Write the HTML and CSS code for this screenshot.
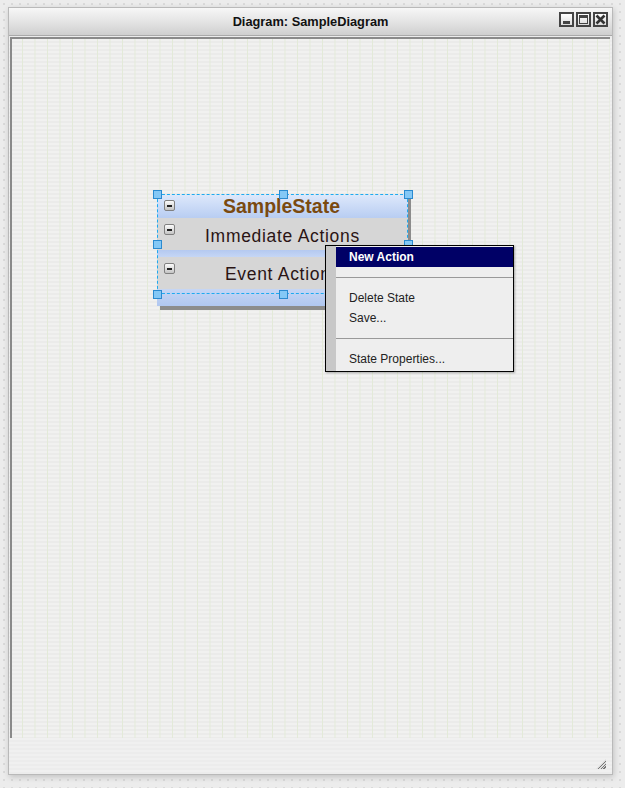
FILE: index.html
```html
<!DOCTYPE html>
<html>
<head>
<meta charset="utf-8">
<link rel="stylesheet" href="styles.css">
</head>
<body>
<div class="window">
  <div class="titlebar">
    <span class="title">Diagram: SampleDiagram</span>
    <div class="winbtns">
      <span class="wbtn wmin"></span>
      <span class="wbtn wmax"></span>
      <span class="wbtn wclose"><svg width="11" height="11" viewBox="0 0 11 11"><path d="M1.5 1.5L9.5 9.5M9.5 1.5L1.5 9.5" stroke="#333" stroke-width="2.6"/></svg></span>
    </div>
  </div>
  <div class="body">
    <div class="canvas">
      <div class="node">
        <div class="node-head"><span class="tog"></span><span class="node-title">SampleState</span></div>
        <div class="node-row first"><span class="tog"></span><span>Immediate Actions</span></div>
        <div class="node-gap"></div>
        <div class="node-row"><span class="tog"></span><span>Event Actions</span></div>
        <div class="node-foot"></div>
      </div>
      <div class="sel"></div>
      <span class="h" style="left:141px;top:151px"></span>
      <span class="h" style="left:267px;top:151px"></span>
      <span class="h" style="left:392px;top:151px"></span>
      <span class="h" style="left:141px;top:201px"></span>
      <span class="h" style="left:392px;top:201px"></span>
      <span class="h" style="left:141px;top:251px"></span>
      <span class="h" style="left:267px;top:251px"></span>
      <span class="h" style="left:392px;top:251px"></span>
      <div class="menu">
        <div class="mi active">New Action</div>
        <div class="msep"></div>
        <div class="mi">Delete State</div>
        <div class="mi">Save...</div>
        <div class="msep"></div>
        <div class="mi">State Properties...</div>
      </div>
    </div>
    <div class="status"><span class="grip"></span></div>
  </div>
</div>
</body>
</html>
```

FILE: styles.css
```css
html, body {
  margin: 0;
  padding: 0;
}
body {
  width: 625px;
  height: 788px;
  background-color: #ececec;
  background-image: radial-gradient(circle, #dadada 0.8px, transparent 1.2px);
  background-size: 8px 8px;
  font-family: "Liberation Sans", Arial, sans-serif;
  overflow: hidden;
  padding-top: 7px;
  box-sizing: border-box;
}
.window {
  margin-left: 8px;
  width: 605px;
  height: 768px;
  box-sizing: border-box;
  border: 1px solid #b9b9b9;
  background: #ededed;
  box-shadow: 1px 2px 6px rgba(0,0,0,0.18);
  display: flex;
  flex-direction: column;
}
.titlebar {
  height: 28px;
  flex: none;
  box-sizing: border-box;
  border-bottom: 1px solid #a9a9a9;
  background: linear-gradient(#f7f7f7, #e4e4e4 50%, #cfcfcf);
  position: relative;
  display: flex;
  align-items: center;
  justify-content: center;
}
.title {
  font-size: 12.8px;
  font-weight: bold;
  color: #111;
  margin-left: 0px;
}
.winbtns {
  position: absolute;
  right: 4px;
  top: 4px;
  display: flex;
  gap: 2px;
}
.wbtn {
  width: 15px;
  height: 15px;
  box-sizing: border-box;
  border: 2px solid #444;
  background: linear-gradient(#ffffff, #dcdcdc);
  position: relative;
  display: flex;
  align-items: center;
  justify-content: center;
}
.wmin::after {
  content: "";
  position: absolute;
  left: 2px;
  right: 2px;
  bottom: 1px;
  height: 3px;
  background: #444;
}
.wmax::after {
  content: "";
  position: absolute;
  left: 1px;
  right: 1px;
  top: 1px;
  bottom: 1px;
  border: 1px solid #444;
  border-top-width: 3px;
}
.wclose svg { display: block; }
.body {
  flex: 1;
  padding: 1px 2px 0 1px;
  display: flex;
  flex-direction: column;
  background: repeating-linear-gradient(#ececec 0, #ececec 2px, #f0f0f0 2px, #f0f0f0 4px);
}
.canvas {
  height: 699px;
  flex: none;
  position: relative;
  border-left: 2px solid #8a8a8a;
  border-top: 2px solid #8a8a8a;
  background-color: #efefed;
  background-image:
    linear-gradient(90deg, #e3ead8 1px, transparent 1px),
    repeating-linear-gradient(#f1f1f0 0, #f1f1f0 2px, #ebebea 2px, #ebebea 4px);
  background-size: 12.5px 100%, 100% 4px;
  background-position: 10px 0, 0 0;
}
.status {
  flex: 1;
  position: relative;
}
.grip {
  position: absolute;
  right: 4px;
  bottom: 5px;
  width: 10px;
  height: 10px;
  background: repeating-linear-gradient(135deg, #777 0, #777 1px, #ddd 1px, #ddd 2px);
  clip-path: polygon(100% 0, 100% 100%, 0 100%);
}
.node {
  position: absolute;
  left: 145px;
  top: 156px;
  width: 251px;
  box-shadow: 3px 4px 0 #8c8c8c;
  background: #c8d8f4;
}
.node-head {
  height: 23px;
  background: linear-gradient(#dde8fb, #b8cdf2);
  display: flex;
  align-items: center;
  justify-content: center;
  position: relative;
}
.node-title {
  font-size: 19.5px;
  font-weight: bold;
  color: #7a4a10;
  margin-left: -2px;
}
.tog {
  position: absolute;
  left: 7px;
  top: 5px;
  width: 11px;
  height: 11px;
  box-sizing: border-box;
  border: 1px solid #808080;
  border-radius: 2px;
  background: linear-gradient(#fbfbfb, #c4c4c4);
}
.tog::after {
  content: "";
  position: absolute;
  left: 2px;
  right: 2px;
  top: 4px;
  height: 2px;
  background: #222;
}
.node-row {
  height: 32px;
  box-sizing: border-box;
  padding-top: 3px;
  background: #d6d6d6;
  display: flex;
  align-items: center;
  justify-content: center;
  position: relative;
  font-size: 17.5px;
  color: #2a1414;
  letter-spacing: 0.7px;
}
.node-row.first { padding-top: 4px; }
.node-row .tog { top: 6px; }
.node-gap {
  height: 7px;
  background: linear-gradient(#b4c9f0, #c5d6f5);
}
.node-foot {
  height: 17px;
  background: linear-gradient(#c6d6f4, #b0c7f0);
}
.sel {
  position: absolute;
  left: 145px;
  top: 155px;
  width: 251px;
  height: 100px;
  box-sizing: border-box;
  border: 1px dashed #1eaaf0;
}
.h {
  position: absolute;
  width: 9px;
  height: 9px;
  box-sizing: border-box;
  border: 1px solid #2a8ad0;
  background: #84c8f6;
}
.menu {
  position: absolute;
  left: 313px;
  top: 206px;
  width: 189px;
  height: 127px;
  box-sizing: border-box;
  border: 1px solid #000;
  background: linear-gradient(90deg, #c8c8c8 0, #c8c8c8 10px, #eeeeee 10px);
  padding: 1px 0 0 10px;
  font-size: 12px;
  color: #222;
  box-shadow: 1px 1px 2px rgba(0,0,0,0.3);
}
.mi {
  height: 20px;
  line-height: 21px;
  padding-left: 13px;
}
.mi.active {
  background: #000066;
  color: #fff;
  font-weight: bold;
}
.msep {
  height: 21px;
  position: relative;
}
.msep::after {
  content: "";
  position: absolute;
  left: 0;
  right: 0;
  top: 10px;
  height: 1px;
  background: #999;
}
```
